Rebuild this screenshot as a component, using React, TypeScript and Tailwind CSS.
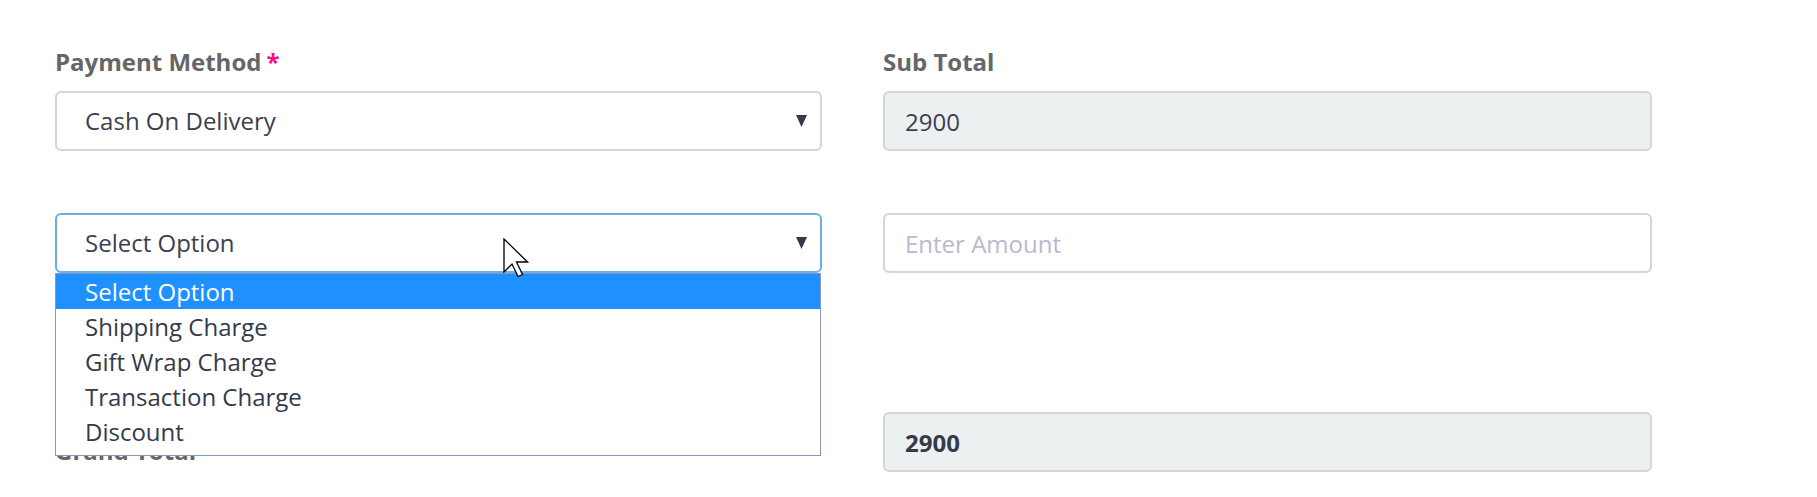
import React from "react";

const options = ["Select Option", "Shipping Charge", "Gift Wrap Charge", "Transaction Charge", "Discount"];

function Caret() {
  return (
    <svg width="11" height="12" viewBox="0 0 11 12" className="shrink-0">
      <polygon points="0,0 11,0 5.5,12" fill="#343a4a" />
    </svg>
  );
}

function Label({ text, required }: { text: string; required?: boolean }) {
  return (
    <div className="h-[36px] text-[24px] leading-[36px] font-bold text-[#666666]">
      {text}
      {required && <span className="ml-[5px] text-[#f70d87]">*</span>}
    </div>
  );
}

function Cursor() {
  return (
    <svg
      width="26"
      height="40"
      viewBox="0 0 26 40"
      className="pointer-events-none absolute left-[503px] top-[238px] z-20"
    >
      <polygon
        points="1,1 1,34 9,26 15,38.5 19.5,36.5 13.5,24 24.5,24"
        fill="#ffffff"
        stroke="#000000"
        strokeWidth="1.3"
        strokeLinejoin="miter"
      />
    </svg>
  );
}

export default function App() {
  return (
    <div className="relative h-[497px] w-[1817px] overflow-hidden bg-white pl-[55px] pt-[44px] font-['Open_Sans',sans-serif]">
      {/* row 1 */}
      <div className="flex gap-[61px]">
        <div className="w-[767px]">
          <Label text="Payment Method" required />
          <div className="mt-[11px] flex h-[60px] items-center justify-between rounded-[6px] border-2 border-[#d1d6d9] bg-white pl-[28px] pr-[13px] text-[24px] text-[#3b3f51]">
            <span>Cash On Delivery</span>
            <Caret />
          </div>
        </div>
        <div className="w-[769px]">
          <Label text="Sub Total" />
          <input
            readOnly
            value="2900"
            className="mt-[11px] h-[60px] w-full rounded-[6px] border-2 border-[#d1d6d9] bg-[#edf0f1] px-[20px] text-[24px] text-[#3b3f51] outline-none"
          />
        </div>
      </div>

      {/* row 2 */}
      <div className="mt-[62px] flex gap-[61px]">
        <div className="relative w-[767px]">
          <div className="flex h-[60px] items-center justify-between rounded-[6px] border-2 border-[#66afe9] bg-white pl-[28px] pr-[13px] text-[24px] text-[#3b3f51]">
            <span>Select Option</span>
            <Caret />
          </div>
          <ul className="absolute left-0 top-full z-10 w-[766px] border border-[#8797b6] bg-white pb-[6px] text-[24px]">
            {options.map((o, i) => (
              <li
                key={o}
                className={
                  i === 0
                    ? "h-[35px] bg-[#1e90ff] pl-[29px] leading-[35px] text-white"
                    : "h-[35px] pl-[29px] leading-[35px] text-[#343a4a]"
                }
              >
                {o}
              </li>
            ))}
          </ul>
        </div>
        <div className="w-[769px]">
          <input
            placeholder="Enter Amount"
            className="h-[60px] w-full rounded-[6px] border-2 border-[#d1d6d9] bg-white px-[20px] text-[24px] text-[#3b3f51] outline-none placeholder:text-[#b7bacd]"
          />
        </div>
      </div>

      {/* row 3 */}
      <div className="mt-[139px] flex items-start gap-[61px]">
        <div className="mt-[21px] w-[767px]">
          <Label text="Grand Total" />
        </div>
        <div className="w-[769px]">
          <input
            readOnly
            value="2900"
            className="h-[60px] w-full rounded-[6px] border-2 border-[#d1d6d9] bg-[#edf0f1] px-[20px] text-[24px] font-bold text-[#343a4a] outline-none"
          />
        </div>
      </div>

      <Cursor />
    </div>
  );
}
